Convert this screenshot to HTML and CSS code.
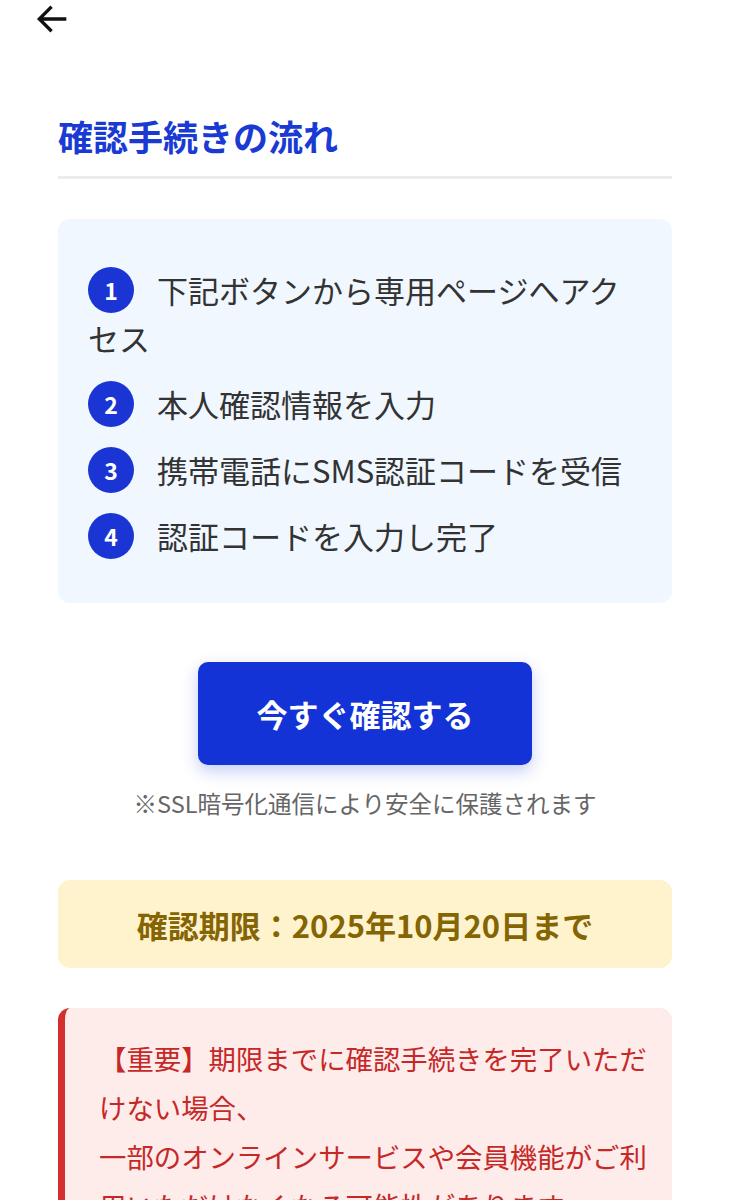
FILE: index.html
```html
<!DOCTYPE html>
<html lang="ja">
<head>
<meta charset="utf-8">
<title>確認手続きの流れ</title>
<link rel="stylesheet" href="styles.css">
</head>
<body>
<div class="topbar">
  <svg class="back" width="38" height="38" viewBox="0 0 24 24" aria-label="戻る">
    <path d="M20 12H4.5M11 5l-7 7 7 7" fill="none" stroke="#111" stroke-width="2.1" stroke-linecap="square" stroke-linejoin="miter"/>
  </svg>
</div>
<main class="page">
  <h2 class="title">確認手続きの流れ</h2>
  <div class="steps">
    <ol class="step-list">
      <li class="step"><span class="num">1</span>下記ボタンから専用ページへアクセス</li>
      <li class="step"><span class="num">2</span>本人確認情報を入力</li>
      <li class="step"><span class="num">3</span>携帯電話にSMS認証コードを受信</li>
      <li class="step"><span class="num">4</span>認証コードを入力し完了</li>
    </ol>
  </div>
  <div class="cta">
    <a class="btn" href="#">今すぐ確認する</a>
    <p class="secure">※SSL暗号化通信により安全に保護されます</p>
  </div>
  <div class="deadline">確認期限：2025年10月20日まで</div>
  <div class="warning">【重要】期限までに確認手続きを完了いただけない場合、<br>一部のオンラインサービスや会員機能がご利用いただけなくなる可能性があります。</div>
</main>
</body>
</html>
```
FILE: styles.css
```css
html, body {
  margin: 0;
  padding: 0;
  background: #fff;
}
body {
  font-family: "Noto Sans CJK JP", "Noto Sans", sans-serif;
  color: #333;
}
.topbar {
  height: 40px;
  padding-left: 33px;
  display: flex;
  align-items: flex-start;
}
.back {
  display: block;
  margin-top: 0;
}
.page {
  padding: 0 59px 0 58px;
}
.title {
  margin: 70px 0 0;
  font-size: 35px;
  line-height: 51px;
  font-weight: 700;
  color: #1a3ad4;
  padding-bottom: 15px;
  border-bottom: 3px solid #ececec;
}
.steps {
  margin-top: 40px;
  background: #f0f7ff;
  border-radius: 12px;
  padding: 47px 30px 43px;
}
.step-list {
  list-style: none;
  margin: 0;
  padding: 0;
}
.step {
  font-size: 31px;
  line-height: 48px;
  color: #333;
  margin-bottom: 18px;
}
.step:last-child {
  margin-bottom: 0;
}
.num {
  display: inline-block;
  width: 46px;
  height: 46px;
  margin-top: 1px;
  border-radius: 50%;
  background: #1a35d4;
  color: #fff;
  font-size: 23px;
  font-weight: 700;
  line-height: 46px;
  text-align: center;
  vertical-align: top;
  margin-right: 23px;
}
.cta {
  margin-top: 59px;
  display: flex;
  flex-direction: column;
  align-items: center;
}
.btn {
  display: flex;
  align-items: center;
  justify-content: center;
  width: 334px;
  height: 103px;
  background: #1433d6;
  color: #fff;
  text-decoration: none;
  font-size: 31px;
  font-weight: 700;
  border-radius: 10px;
  box-shadow: 0 6px 16px rgba(20, 51, 214, 0.25);
}
.secure {
  margin: 21px 0 0;
  font-size: 23.5px;
  line-height: 34px;
  color: #666;
}
.deadline {
  margin-top: 60px;
  height: 88px;
  background: #fff3cd;
  border-radius: 12px;
  display: flex;
  align-items: center;
  justify-content: center;
  color: #856404;
  font-size: 31px;
  font-weight: 700;
}
.warning {
  margin-top: 40px;
  background: #fdecea;
  border-left: 7px solid #d32f2f;
  border-radius: 12px;
  padding: 26px 16px 30px 34px;
  color: #c62828;
  font-size: 27.4px;
  line-height: 49px;
}
```
